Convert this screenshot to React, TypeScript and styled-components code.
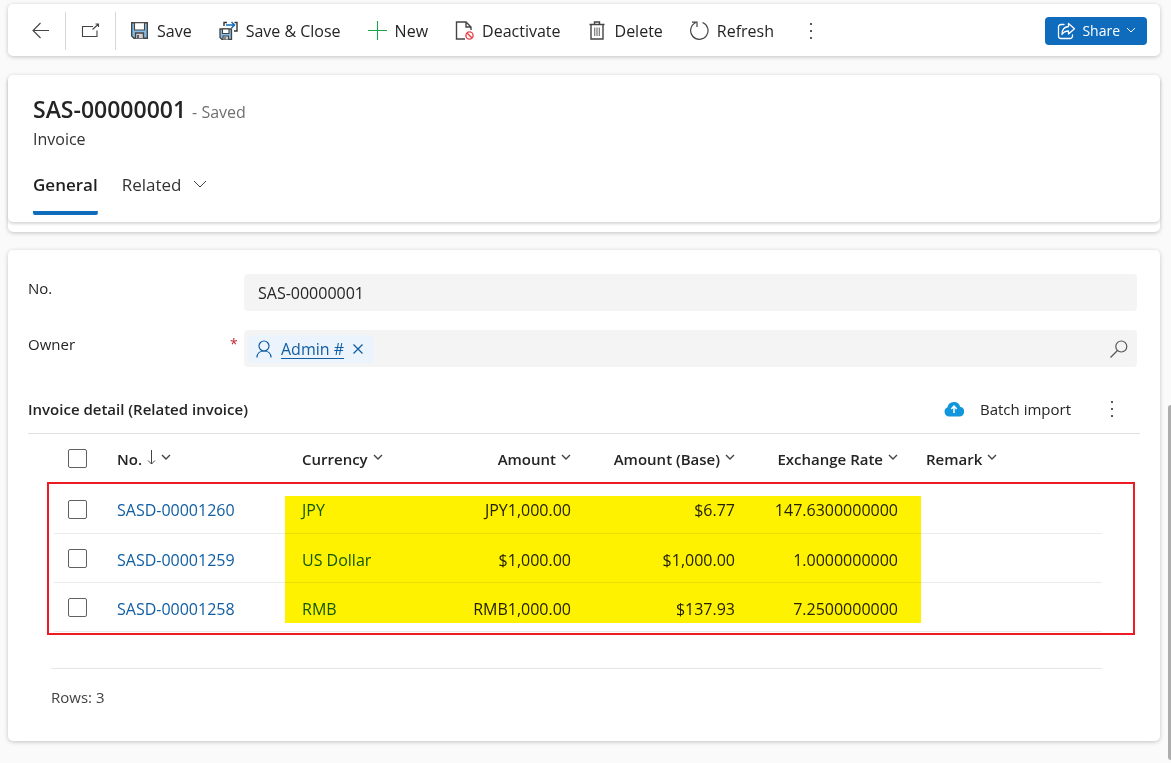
import React from "react";
import styled, { createGlobalStyle, css } from "styled-components";

const GlobalStyle = createGlobalStyle`
  *, *::before, *::after { box-sizing: border-box; }
  body {
    margin: 0;
    background: #fafafa;
    color: #242424;
    font-family: "Open Sans", "Noto Sans", sans-serif;
    font-size: 16px;
    line-height: 24px;
  }
  button, input { font: inherit; color: inherit; }
  svg { display: block; flex: none; }
`;

const Page = styled.div`
  position: relative;
  min-height: 100vh;
  padding: 4px 11px 20px 8px;
`;

const cardSurface = css`
  background: #fff;
  border-radius: 5px;
  box-shadow: 0 1px 4px rgba(0, 0, 0, 0.22);
`;

const CommandBar = styled.nav`
  ${cardSurface}
  display: flex;
  align-items: center;
  height: 52px;
  padding: 1px 13px 0 8px;
`;

const PlainButton = styled.button`
  display: flex;
  align-items: center;
  padding: 0;
  border: 0;
  background: none;
  cursor: pointer;
`;

const NavButton = styled(PlainButton)`
  justify-content: center;
  width: 50px;
  height: 38px;
  border-right: 1px solid #d6d6d6;
`;

const Commands = styled.div`
  display: flex;
  align-items: center;
  gap: 27px;
  margin-left: 14px;
`;

const Command = styled(PlainButton)`
  gap: 8px;
  font-size: 16px;
  white-space: nowrap;
`;

const MoreButton = styled(PlainButton)`
  justify-content: center;
  width: 20px;
  height: 32px;
`;

const ShareButton = styled.button`
  display: flex;
  align-items: center;
  gap: 6px;
  height: 28px;
  margin-left: auto;
  padding: 0 11px 0 12px;
  border: 0;
  border-radius: 4px;
  background: #0f6cbd;
  color: #fff;
  font-size: 14px;
  line-height: 20px;
  cursor: pointer;
`;

const HeaderStack = styled.header`
  ${cardSurface}
  margin-top: 19px;
  padding-bottom: 10px;
`;

const HeaderCard = styled.div`
  padding: 19px 25px 7px;
  border-radius: 5px;
  background: #fff;
  box-shadow: 0 2px 3px rgba(0, 0, 0, 0.16);
`;

const TitleRow = styled.div`
  display: flex;
  align-items: baseline;
  gap: 6px;
  height: 33px;
`;

const Title = styled.h1`
  margin: 0;
  font-size: 23px;
  font-weight: 600;
  line-height: 30px;
`;

const SaveState = styled.span`
  color: #707070;
  font-size: 16px;
`;

const EntityName = styled.div`
  color: #333;
  font-size: 16px;
`;

const Tabs = styled.div`
  display: flex;
  gap: 24px;
  margin-top: 22px;
`;

const Tab = styled.button<{ $active?: boolean }>`
  display: flex;
  align-items: flex-start;
  gap: 12px;
  height: 42px;
  padding: 0;
  border: 0;
  background: linear-gradient(#0f6cbd, #0f6cbd) bottom / 100% ${(p) => (p.$active ? "4px" : "0")} no-repeat;
  color: ${(p) => (p.$active ? "#1f1f1f" : "#333")};
  font-size: 17px;
  font-weight: ${(p) => (p.$active ? 600 : 400)};
  border-radius: 2px;
  cursor: pointer;

  svg { margin-top: 7px; }
`;

const FormCard = styled.main`
  ${cardSurface}
  margin-top: 18px;
  padding: 24px 20px 32px;
`;

const Fields = styled.div`
  display: grid;
  gap: 19px;
  padding-right: 3px;
`;

const FieldRow = styled.div`
  display: grid;
  grid-template-columns: 208px 8px 1fr;
`;

const FieldLabel = styled.label`
  font-size: 15px;
  line-height: 28px;
`;

const Required = styled.span`
  color: #c4262e;
  font-size: 14px;
  line-height: 28px;
  text-indent: -6px;
`;

const fieldSurface = css`
  width: 100%;
  height: 37px;
  border: 0;
  border-radius: 4px;
  background: #f4f4f4;
`;

const TextField = styled.input`
  ${fieldSurface}
  padding: 0 14px;
  grid-column: 3;
`;

const Lookup = styled.div`
  ${fieldSurface}
  display: flex;
  align-items: center;
  padding: 0 9px 0 4px;
`;

const LookupInput = styled.input`
  flex: 1;
  min-width: 0;
  border: 0;
  background: none;
`;

const Chip = styled.span`
  display: flex;
  align-items: center;
  gap: 9px;
  height: 28px;
  padding: 0 10px 0 8px;
  border-radius: 4px;
  background: #ebf3fc;
  color: #115ea3;
`;

const ChipLink = styled.a`
  color: inherit;
  text-decoration: underline;
  text-underline-offset: 3px;
`;

const SectionHeader = styled.div`
  display: flex;
  align-items: center;
  height: 47px;
  margin-top: 20px;
  padding: 0 18px 2px 0;
  border-bottom: 1px solid #e0e0e0;
`;

const SectionTitle = styled.h2`
  margin: 0 auto 0 0;
  font-size: 15px;
  font-weight: 600;
`;

const BatchButton = styled(PlainButton)`
  gap: 16px;
  margin-right: 31px;
  font-size: 15px;
`;

const GridArea = styled.div`
  position: relative;
  padding: 0 38px 0 26px;
`;

const Table = styled.table`
  width: 100%;
  border-collapse: collapse;
  table-layout: fixed;
`;

const Col = styled.col<{ $w?: number }>`
  width: ${(p) => (p.$w ? p.$w + "px" : "auto")};
`;

const HeadCell = styled.th<{ $right?: boolean }>`
  height: 50px;
  padding: 0 12px 0 16px;
  font-size: 15px;
  font-weight: 600;
  text-align: left;

  button {
    gap: 5px;
    margin-left: ${(p) => (p.$right ? "auto" : "0")};
    font-weight: inherit;
    white-space: nowrap;
  }
  svg { margin-bottom: 3px; }
`;

const Cell = styled.td<{ $right?: boolean }>`
  height: 49px;
  padding: 4px 12px 0 16px;
  border-bottom: 1px solid #ebebeb;
  text-align: ${(p) => (p.$right ? "right" : "left")};
  white-space: nowrap;
`;

const CellLink = styled.a`
  color: #115ea3;
  text-decoration: none;
`;

const Check = styled.input`
  display: block;
  appearance: none;
  width: 19px;
  height: 19px;
  margin: 0 0 2px -2px;
  border: 1px solid #616161;
  border-radius: 2px;
  background: #fff;
`;

const RowsOutline = styled.div`
  position: absolute;
  top: 48px;
  right: 5px;
  bottom: -3px;
  left: 19px;
  border: 2px solid #ed1c24;
  pointer-events: none;
`;

const Highlight = styled.div`
  position: absolute;
  top: 62px;
  left: 257px;
  width: 636px;
  height: 127px;
  background: #fff200;
  mix-blend-mode: multiply;
  pointer-events: none;
`;

const RowCount = styled.footer`
  margin: 36px 38px 0 23px;
  padding-top: 16px;
  border-top: 1px solid #e6e6e6;
  color: #424242;
  font-size: 15px;
`;

const ScrollThumb = styled.div`
  position: absolute;
  top: 405px;
  right: 0;
  bottom: 3px;
  width: 3px;
  border-radius: 3px 0 0 3px;
  background: #adadad;
`;

const Icon = ({ w = 19, h = 19, children }: { w?: number; h?: number; children: React.ReactNode }) => (
  <svg width={w} height={h} viewBox={`0 0 ${w} ${h}`} fill="none" stroke="#444" strokeWidth="1.1" aria-hidden="true">
    {children}
  </svg>
);

const BackIcon = () => (
  <Icon><path d="M18 9.500H2M9.500 2L2 9.500L9.500 17" /></Icon>
);
const PopoutIcon = () => (
  <Icon><path d="M12 5.500H1.500V15.500H16V9.500M11.500 8.500L17.500 3M14.500 3H17.500V6" /></Icon>
);
const SaveIcon = () => (
  <Icon>
    <path d="M1.700 1.700H17.300V17.300H4L1.700 15Z" fill="#83beec" stroke="#444" strokeWidth="1.400" />
    <path d="M4.500 1.700H14.500V9H4.500Z" fill="#fff" stroke="#444" />
    <path d="M5.500 17.300V12H13.500V17.300" fill="#d2d2d2" stroke="#444" strokeWidth="1.400" />
    <path d="M8 14V17" stroke="#444" strokeWidth="1.600" />
  </Icon>
);
const SaveCloseIcon = () => (
  <Icon>
    <path d="M5 5V1.500H8M15.500 1.500H18V10H15" stroke="#333" strokeWidth="1.400" />
    <path d="M7 4H15M12.500 1L15.500 4L12.500 7" stroke="#0f6cbd" strokeWidth="1.500" />
    <path d="M1 8H12.500V18.500H3L1 16.500Z" fill="#83beec" stroke="#444" strokeWidth="1.300" />
    <path d="M3.500 8H10V12.500H3.500Z" fill="#fff" stroke="#444" />
    <path d="M4 18.500V15H9.500V18.500" fill="#d2d2d2" stroke="#444" />
    <path d="M6 16V18.500" stroke="#444" />
  </Icon>
);
const PlusIcon = () => (
  <Icon><path d="M0 9.500H19M9.500 0V19" stroke="#1aa34a" /></Icon>
);
const DeactivateIcon = () => (
  <Icon>
    <path d="M10 18H1.500V1H11L16 6V9M11 1V6H16" strokeWidth="1.400" />
    <circle cx="14.500" cy="14.500" r="3.600" stroke="#e8434a" strokeWidth="1.400" />
    <path d="M12 12L17 17" stroke="#e8434a" strokeWidth="1.400" />
  </Icon>
);
const TrashIcon = () => (
  <Icon>
    <path d="M1.500 3.500H16.500M6.500 3.500V1H11.500V3.500M3 3.500V18H15V3.500" strokeWidth="1.400" />
    <path d="M6.700 6.500V15M9 6.500V15M11.300 6.500V15" stroke="#777" strokeWidth="1.200" />
  </Icon>
);
const RefreshIcon = () => (
  <Icon><path d="M12.500 1.500A8.700 8.700 0 1 1 5.500 1.800M2 1.200H7V6" strokeWidth="1.200" /></Icon>
);
const DotsIcon = () => (
  <svg width="4" height="18" viewBox="0 0 4 18" fill="#333" aria-hidden="true">
    <circle cx="2" cy="2" r="1.100" /><circle cx="2" cy="9" r="1.100" /><circle cx="2" cy="16" r="1.100" />
  </svg>
);
const ShareIcon = () => (
  <svg width="19" height="18" viewBox="0 0 19 18" fill="none" stroke="#fff" strokeWidth="1.300" strokeLinejoin="round" strokeLinecap="round" aria-hidden="true">
    <path d="M7 2.500H4A2.500 2.500 0 0 0 1.500 5V14A2.500 2.500 0 0 0 4 16.500H13A2.500 2.500 0 0 0 15.500 14V13" />
    <path d="M11.500 1.500L17.500 6.700L11.500 12V9C8.500 9 6.500 10 5 12.500C5 8 7.500 4.800 11.500 4.500Z" />
  </svg>
);
const Chevron = ({ w = 10, color = "#444", weight = 1.4 }: { w?: number; color?: string; weight?: number }) => (
  <svg width={w} height={w / 2 + 2} viewBox={`0 0 ${w} ${w / 2 + 2}`} fill="none" stroke={color} strokeWidth={weight} aria-hidden="true">
    <path d={`M1 1L${w / 2} ${w / 2}L${w - 1} 1`} />
  </svg>
);
const SortIcon = () => (
  <svg width="9" height="15" viewBox="0 0 9 15" fill="none" stroke="#444" aria-hidden="true">
    <path d="M4.500 0V14M1 10.500L4.500 14L8 10.500" />
  </svg>
);
const PersonIcon = () => (
  <svg width="16" height="18" viewBox="0 0 16 18" fill="none" stroke="#115ea3" strokeWidth="1.200" aria-hidden="true">
    <circle cx="8" cy="6" r="5" /><path d="M1 17.500C1 13.500 4 11 8 11S15 13.500 15 17.500" />
  </svg>
);
const CloseIcon = () => (
  <svg width="10" height="10" viewBox="0 0 10 10" fill="none" stroke="#115ea3" strokeWidth="1.300" aria-hidden="true">
    <path d="M0.500 0.500L9.500 9.500M9.500 0.500L0.500 9.500" />
  </svg>
);
const SearchIcon = () => (
  <svg width="18" height="18" viewBox="0 0 18 18" fill="none" stroke="#555" strokeWidth="1.200" aria-hidden="true">
    <circle cx="11.300" cy="6.500" r="5.500" /><path d="M7.500 10.500L0.500 17.500" />
  </svg>
);
const CloudIcon = () => (
  <svg width="20" height="16" viewBox="0 0 20 16" aria-hidden="true">
    <path d="M5 15.500A4.800 4.800 0 0 1 3.500 6.300A6.500 6.500 0 0 1 16.200 5.800A4.900 4.900 0 0 1 15 15.500Z" fill="#1296db" />
    <path d="M10 12V5.500M7.300 8L10 5.200L12.700 8" fill="none" stroke="#fff" strokeWidth="1.500" />
  </svg>
);

const commands = [
  { label: "Save", icon: <SaveIcon /> },
  { label: "Save & Close", icon: <SaveCloseIcon /> },
  { label: "New", icon: <PlusIcon /> },
  { label: "Deactivate", icon: <DeactivateIcon /> },
  { label: "Delete", icon: <TrashIcon /> },
  { label: "Refresh", icon: <RefreshIcon /> },
];

const columns = [
  { label: "No.", width: 185, sorted: true },
  { label: "Currency", width: 139 },
  { label: "Amount", width: 158, right: true },
  { label: "Amount (Base)", width: 164, right: true },
  { label: "Exchange Rate", width: 163, right: true },
  { label: "Remark" },
];

const rows = [
  { no: "SASD-00001260", currency: "JPY", amount: "JPY1,000.00", base: "$6.77", rate: "147.6300000000" },
  { no: "SASD-00001259", currency: "US Dollar", amount: "$1,000.00", base: "$1,000.00", rate: "1.0000000000" },
  { no: "SASD-00001258", currency: "RMB", amount: "RMB1,000.00", base: "$137.93", rate: "7.2500000000" },
];

export default function App() {
  return (
    <>
      <GlobalStyle />
      <Page>
        <CommandBar>
          <NavButton aria-label="Back"><BackIcon /></NavButton>
          <NavButton aria-label="Open in new window"><PopoutIcon /></NavButton>
          <Commands>
            {commands.map((c) => (
              <Command key={c.label}>{c.icon}{c.label}</Command>
            ))}
            <MoreButton aria-label="More commands"><DotsIcon /></MoreButton>
          </Commands>
          <ShareButton><ShareIcon />Share<Chevron w={10} color="#fff" weight={1} /></ShareButton>
        </CommandBar>

        <HeaderStack>
          <HeaderCard>
            <TitleRow>
              <Title>SAS-00000001</Title>
              <SaveState>- Saved</SaveState>
            </TitleRow>
            <EntityName>Invoice</EntityName>
            <Tabs role="tablist">
              <Tab role="tab" aria-selected="true" $active>General</Tab>
              <Tab role="tab" aria-selected="false">Related<Chevron w={14} weight={1} /></Tab>
            </Tabs>
          </HeaderCard>
        </HeaderStack>

        <FormCard>
          <Fields>
            <FieldRow>
              <FieldLabel htmlFor="no">No.</FieldLabel>
              <TextField id="no" readOnly value="SAS-00000001" />
            </FieldRow>
            <FieldRow>
              <FieldLabel htmlFor="owner">Owner</FieldLabel>
              <Required>*</Required>
              <Lookup>
                <Chip>
                  <PersonIcon />
                  <ChipLink href="#owner">Admin #</ChipLink>
                  <PlainButton aria-label="Remove owner"><CloseIcon /></PlainButton>
                </Chip>
                <LookupInput id="owner" />
                <PlainButton aria-label="Search"><SearchIcon /></PlainButton>
              </Lookup>
            </FieldRow>
          </Fields>

          <SectionHeader>
            <SectionTitle>Invoice detail (Related invoice)</SectionTitle>
            <BatchButton><CloudIcon />Batch import</BatchButton>
            <MoreButton aria-label="More actions"><DotsIcon /></MoreButton>
          </SectionHeader>

          <GridArea>
            <Table>
              <colgroup>
                <Col $w={47} />
                {columns.map((c) => <Col key={c.label} $w={c.width} />)}
              </colgroup>
              <thead>
                <tr>
                  <HeadCell><Check type="checkbox" aria-label="Select all rows" /></HeadCell>
                  {columns.map((c) => (
                    <HeadCell key={c.label} $right={c.right}>
                      <PlainButton>{c.label}{c.sorted && <SortIcon />}<Chevron w={10} /></PlainButton>
                    </HeadCell>
                  ))}
                </tr>
              </thead>
              <tbody>
                {rows.map((r) => (
                  <tr key={r.no}>
                    <Cell><Check type="checkbox" aria-label={`Select ${r.no}`} /></Cell>
                    <Cell><CellLink href={`#${r.no}`}>{r.no}</CellLink></Cell>
                    <Cell><CellLink href={`#${r.currency}`}>{r.currency}</CellLink></Cell>
                    <Cell $right>{r.amount}</Cell>
                    <Cell $right>{r.base}</Cell>
                    <Cell $right>{r.rate}</Cell>
                    <Cell />
                  </tr>
                ))}
              </tbody>
            </Table>
            <Highlight />
            <RowsOutline />
          </GridArea>

          <RowCount>Rows: 3</RowCount>
        </FormCard>
        <ScrollThumb />
      </Page>
    </>
  );
}
